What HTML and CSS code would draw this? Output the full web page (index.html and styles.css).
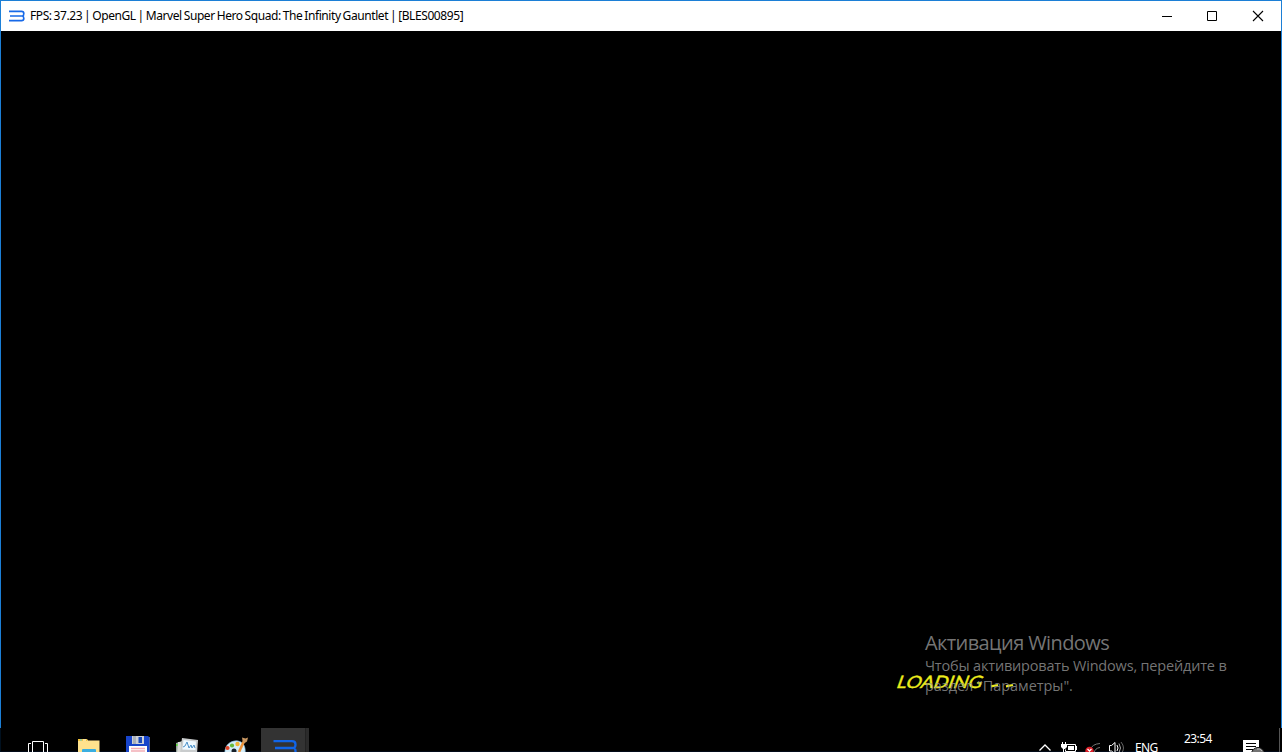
FILE: index.html
```html
<!DOCTYPE html>
<html lang="ru">
<head>
<meta charset="utf-8">
<title>RPCS3</title>
<link rel="stylesheet" href="styles.css">
</head>
<body>
<div class="window">
  <header class="titlebar">
    <svg class="logo" width="16" height="12" viewBox="0 0 16 12" fill="none" stroke="#1769e8" stroke-width="1.7"><path d="M0 1.3H12.500Q14.800 1.300 14.800 3.500T13.500 6Q14.800 6.500 14.800 8.500T12.500 10.700H0M1 6H14"/></svg>
    <h1 class="title">FPS: 37.23 | OpenGL | Marvel Super Hero Squad: The Infinity Gauntlet | [BLES00895]</h1>
    <div class="controls">
      <svg width="46" height="29" viewBox="0 0 46 29"><path d="M19 14.500h10" stroke="#000"/></svg>
      <svg width="46" height="29" viewBox="0 0 46 29"><path d="M18.500 9.500h9v9h-9z" fill="none" stroke="#000"/></svg>
      <svg width="46" height="29" viewBox="0 0 46 29"><path d="M18 9l10 10M28 9l-10 10" stroke="#000" stroke-width="1.1"/></svg>
    </div>
  </header>
  <main class="game"></main>
</div>
<svg class="loading" width="130" height="30" viewBox="0 0 130 30">
  <text class="loading-text" x="4" y="20.500" textLength="85" lengthAdjust="spacingAndGlyphs" transform="translate(6 0) skewX(-20)">LOADING</text>
  <path d="M98 18.300l7-1.300M113 18.300l7-1.300" stroke="#ecec1c" stroke-width="2.200"/>
</svg>
<aside class="activation">
  <p class="act-title">Активация Windows</p>
  <p class="act-line first">Чтобы активировать Windows, перейдите в</p>
  <p class="act-line second">раздел "Параметры".</p>
</aside>
<footer class="taskbar">
  <div class="apps">
    <svg width="48" height="24" viewBox="14 728 48 24" fill="none" stroke="#fff"><path d="M32.500 754V741.500H43.500V754M31 743.500H28.500V754M45 743.500H47.500V754"/></svg>
    <svg width="48" height="24" viewBox="63 728 48 24"><path d="M78 739h9l1 1.500h11.500V754H78z" fill="#ffe28d"/><path d="M78 739h9v2h-9z" fill="#f6c63c"/><path d="M80 740h2" stroke="#4ed0e8"/><path d="M83 740h3" stroke="#fff"/><path d="M82 752v-2q0-1 1-1h12q1 0 1 1v2z" fill="#3aaee0"/></svg>
    <svg width="48" height="24" viewBox="112 728 48 24"><path d="M126 736h22l2 2v16h-24z" fill="#1845ca"/><path d="M149.500 737v15" stroke="#4a5f9a"/><path d="M132 736h12v8h-12z" fill="#cdd0d5"/><path d="M133 736h3v8h-3z" fill="#aab0b8"/><path d="M138.500 737h3.500v6h-3.500z" fill="#1a49b8"/><path d="M129 746h18v8h-18z" fill="#fff"/><path d="M131 748.500h14M131 751h14" stroke="#f2adb5" stroke-width="1.500"/></svg>
    <svg width="48" height="24" viewBox="161 728 48 24"><path d="M176 743l6-2 1 13h-7z" fill="#94a29a"/><path d="M176 745h2" stroke="#55ce37" stroke-width="2"/><path d="M178 742h3v12h-4z" fill="#dadcd8"/><path d="M182 738l16 2-1 14h-17z" fill="#c9cccd"/><path d="M183.500 740l12.500 1.500-.6 8.500-13-.5z" fill="#eef9ff"/><path d="M183 747l2-1 2-4 2 6 2-3 1 3 2-3 1 3" fill="none" stroke="#4b91c9"/></svg>
    <svg width="48" height="24" viewBox="210 728 48 24"><path d="M225 754c-1-9 6-14 13-13 5 1 8 5 7 13z" fill="#d5eefa" stroke="#8bc0df" stroke-width=".7"/><circle cx="227.500" cy="748" r="2.100" fill="#e14425"/><circle cx="232" cy="745.500" r="2.100" fill="#67ba38"/><circle cx="237.500" cy="744" r="2.200" fill="#f3b536"/><circle cx="234" cy="751" r="2.500" fill="#172029"/><path d="M239 752l5-11" stroke="#ec9136" stroke-width="2.600"/><path d="M242 737.500l3.500 1 2.500-1-1 4-3 2-1.500-3z" fill="#c89762"/></svg>
    <svg class="active" width="48" height="24" viewBox="261 728 48 24"><path d="M305 728h4v24h-4z" fill="#2b2b2b"/><path d="M305.500 728v24" stroke="#222"/><path d="M273.500 741.200H292Q295.500 741.200 295.500 744.500Q295.500 747.500 293.500 748Q295.500 748.500 295.500 751V754M275 748H294" fill="none" stroke="#1165e8" stroke-width="2.300"/></svg>
  </div>
  <div class="tray">
    <svg width="96" height="24" viewBox="1035 728 96 24" fill="none" stroke="#fff">
      <path d="M1039.500 750.500l5.500-5.500 5.500 5.500" stroke-width="1.300"/>
      <path d="M1067 744.500h8.500v7h-10v-2"/><path d="M1076 746h1v4h-1zM1062 742h1v2h-1zM1065 742h1v2h-1zM1061 744h6v3l-2 2h-2l-2-2zM1063 749h1v3h-1zM1068 746h6v4h-6z" fill="#fff" stroke="none"/>
      <path d="M1090 750q2-6 10-6.500M1094 753q1-5 6-5.500" stroke="#777"/><circle cx="1089.500" cy="751" r="4.200" fill="#dc2029" stroke="none"/><path d="M1087.500 749l4 4M1091.500 749l-4 4" stroke-width="1.200"/>
      <path d="M1109.500 745.500h2l3.500-3V754l-3.500-3h-2z"/><path d="M1117 745q2 3 0 6"/><path d="M1119 743.500q3 4.500 0 9" stroke="#aaa"/><path d="M1121 742q5 6 0 12" stroke="#666"/>
    </svg>
    <span class="lang">ENG</span>
    <span class="clock">23:54</span>
    <svg width="41" height="24" viewBox="1241 728 41 24"><path d="M1243 740h16v14h-16z" fill="#fff"/><path d="M1246 743.500h10M1246 746.500h10M1246 749.500h7" stroke="#000"/><circle cx="1258" cy="754" r="6.500" fill="#737373" stroke="#111"/><path d="M1257 749q3-1 5 2" stroke="#bbb" fill="none"/><path d="M1279.500 728v24" stroke="#555"/></svg>
  </div>
</footer>
</body>
</html>
```
FILE: styles.css
```css
* { box-sizing: border-box; }
body { margin: 0; width: 1282px; height: 752px; overflow: hidden; background: #000; font-family: "Open Sans", "Noto Sans", sans-serif; position: relative; }
.window { height: 728px; border: 1px solid #1c7fd6; border-bottom: 0; display: flex; flex-direction: column; }
.titlebar { height: 30px; background: #fff; display: flex; align-items: center; padding-left: 8px; flex: none; }
.logo { margin-right: 5px; flex: none; }
.title { margin: 0; font: 12px/28px "Noto Sans", sans-serif; letter-spacing: -0.41px; word-spacing: -0.8px; color: #000; white-space: nowrap; }
.controls { display: flex; margin-left: auto; height: 29px; }
.game { flex: 1; background: #000; }
.loading { position: absolute; left: 893px; top: 668px; }
.loading-text { font: 17px "Lato", sans-serif; fill: #ecec1c; stroke: #ecec1c; stroke-width: 0.4px; }
.activation { position: absolute; left: 925px; top: 630px; color: rgba(145, 145, 145, 0.82); white-space: nowrap; }
.activation p { margin: 0; width: max-content; }
.act-title { font-size: 20px; line-height: 26px; letter-spacing: -0.6px; }
.act-line { font-size: 14.5px; line-height: 20px; letter-spacing: -0.18px; }
.second { letter-spacing: -0.06px; }
.taskbar { height: 24px; display: flex; justify-content: space-between; background: #000; border-left: 1px solid #00101f; box-shadow: inset 0 -1px #020a18; }
.apps { display: flex; gap: 1px; padding-left: 13px; }
.active { background: #333; margin-left: 2px; }
.tray { display: flex; color: #fff; }
.lang, .clock { font: 12px/16px "Noto Sans", sans-serif; letter-spacing: -0.6px; white-space: nowrap; }
.lang { width: 53px; padding: 16px 0 0 4px; line-height: 8px; }
.clock { width: 57px; padding: 3px 0 0; }
```
